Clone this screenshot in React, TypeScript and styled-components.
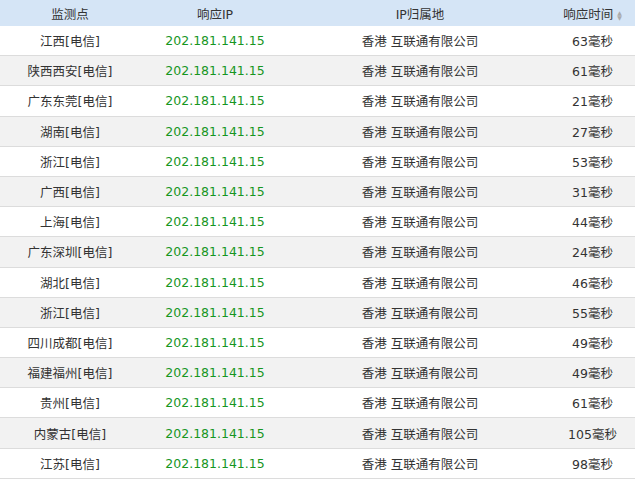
import React from "react";
import styled, { createGlobalStyle } from "styled-components";

const G = createGlobalStyle`
  body { margin: 0; background: #fff; font-family: "DejaVu Sans", "Noto Sans CJK SC", sans-serif; }
`;
const Table = styled.table`
  width: 635px; border-collapse: collapse; table-layout: fixed; font-size: 12.5px; color: #333;
`;
const Th = styled.th<{ w: number }>`
  width: ${p => p.w}px; height: 26px; padding: 0; background: #d5e5f6; font-weight: normal; text-align: center; color: #333; white-space: nowrap;
`;
const Tr = styled.tr<{ alt: boolean }>`
  background: ${p => (p.alt ? "#f2f2f2" : "#fff")};
  border-bottom: 1px solid #dcdcdc;
`;
const Td = styled.td<{ green?: boolean }>`
  height: 29.2px; padding: 0; text-align: center; white-space: nowrap; color: ${p => (p.green ? "#17961f" : "#333")};
`;
const Sort = styled.span`
  display: inline-flex; flex-direction: column; margin-left: 4px; font-size: 6px; color: #aaa; line-height: 5px; vertical-align: middle;
`;
const rows: [string, number][] = [
  ["江西[电信]", 63], ["陕西西安[电信]", 61], ["广东东莞[电信]", 21], ["湖南[电信]", 27],
  ["浙江[电信]", 53], ["广西[电信]", 31], ["上海[电信]", 44], ["广东深圳[电信]", 24],
  ["湖北[电信]", 46], ["浙江[电信]", 55], ["四川成都[电信]", 49], ["福建福州[电信]", 49],
  ["贵州[电信]", 61], ["内蒙古[电信]", 105], ["江苏[电信]", 98],
];
export default function App() {
  return (
    <>
      <G />
      <Table>
        <thead>
          <tr>
            <Th w={140}>监测点</Th>
            <Th w={150}>响应IP</Th>
            <Th w={260}>IP归属地</Th>
            <Th w={85}>响应时间<Sort><span>▲</span><span>▼</span></Sort></Th>
          </tr>
        </thead>
        <tbody>
          {rows.map(([n, t], i) => (
            <Tr key={i} alt={i % 2 === 1}>
              <Td>{n}</Td>
              <Td green>202.181.141.15</Td>
              <Td>香港 互联通有限公司</Td>
              <Td>{t}毫秒</Td>
            </Tr>
          ))}
        </tbody>
      </Table>
    </>
  );
}
